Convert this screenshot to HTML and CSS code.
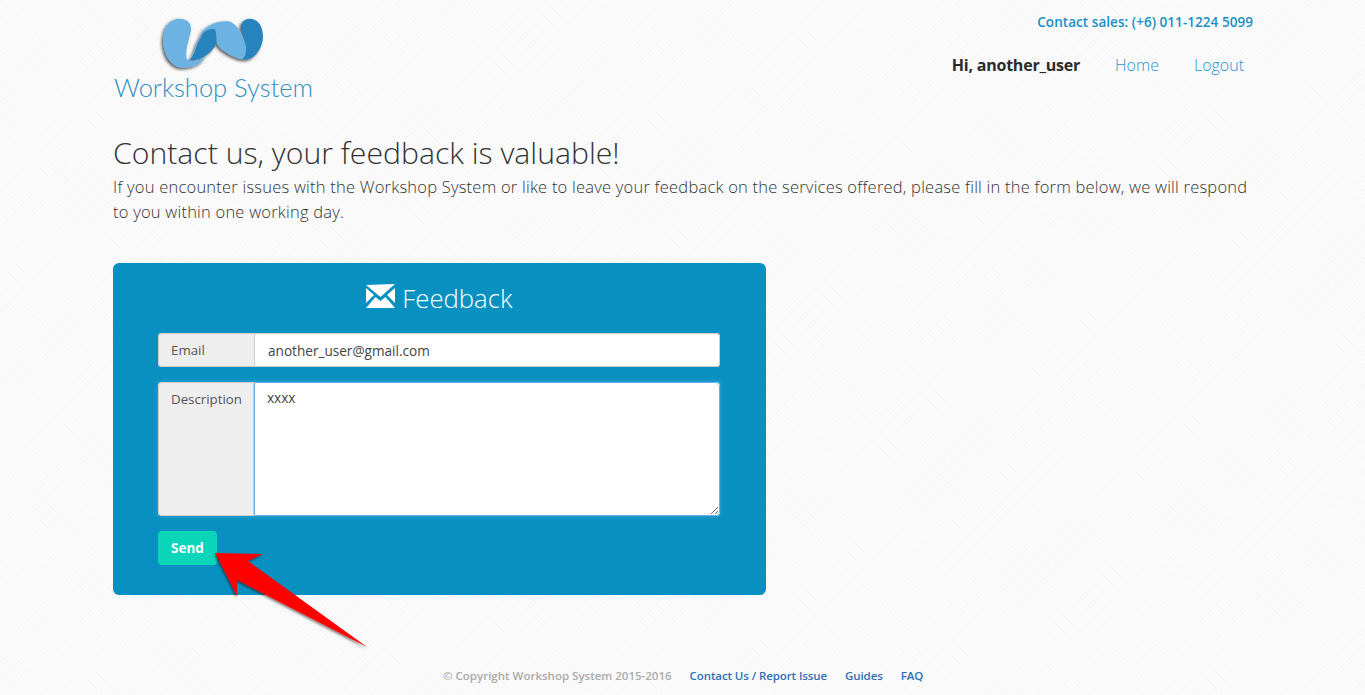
FILE: index.html
```html
<!DOCTYPE html>
<html lang="en">
<head>
    <meta charset="UTF-8">
    <meta name="viewport" content="width=device-width, initial-scale=1.0">
    <title>Contact us - Workshop System</title>
    <link rel="stylesheet" href="styles.css">
</head>
<body>

<div class="container">
    <header class="site-header">
        <a class="logo" href="#">
            <svg class="logo-mark" width="120" height="72" viewBox="150 27 360 216">
                <defs>
                    <filter id="logoShadow" x="-20%" y="-20%" width="140%" height="140%">
                        <feDropShadow dx="-5" dy="5" stdDeviation="5" flood-color="#000" flood-opacity="0.65"/>
                    </filter>
                </defs>
                <g filter="url(#logoShadow)">
                    <path fill="#2583bb" d="M425 178 C445 165 438 135 428 105 C420 85 420 70 435 60 C455 50 478 62 485 85 C495 115 485 150 460 170 C450 178 437 180 425 178 Z"/>
                    <path fill="#2583bb" d="M265 182 C285 170 282 135 305 105 C318 88 335 82 345 88 C352 110 350 120 350 130 C335 160 300 185 265 182 Z"/>
                    <path fill="#6cb2e2" d="M298 105 C318 76 350 60 385 64 C412 70 425 100 435 130 C441 150 440 170 425 178 C395 170 365 155 350 130 C350 115 350 100 345 88 C330 84 312 92 298 105 Z"/>
                    <path fill="#6cb2e2" d="M230 57 C260 52 278 70 272 95 C265 125 255 150 260 178 C275 186 300 184 318 172 C300 195 275 205 245 203 C210 200 188 160 190 115 C192 85 205 62 230 57 Z"/>
                </g>
                <path fill="none" stroke="#a9d3ef" stroke-width="1.5" d="M270 175 C288 160 285 130 305 110"/>
            </svg>
            <span class="logo-text">Workshop System</span>
        </a>
        <div class="header-right">
            <div class="sales">Contact sales: (+6) 011-1224 5099</div>
            <nav class="main-nav">
                <span class="greeting">Hi, another_user</span>
                <a href="#">Home</a>
                <a href="#">Logout</a>
            </nav>
        </div>
    </header>

    <section class="intro">
        <h1>Contact us, your feedback is valuable!</h1>
        <p>If you encounter issues with the Workshop System or like to leave your feedback on the services offered, please fill in the form below, we will respond to you within one working day.</p>
    </section>

    <form class="feedback-panel">
        <h2>
            <svg class="mail-icon" width="29" height="25" viewBox="0 0 29 25">
                <path fill="#fff" d="M0 1 L29 0 L14.5 13 Z"/>
                <path fill="#fff" d="M0 4 L8 11 L0 19 Z"/>
                <path fill="#fff" d="M29 4 L21 11 L29 19 Z"/>
                <path fill="#fff" d="M0 24 L9.5 13 L14.5 17 L19.5 13 L29 24 Z"/>
            </svg>
            Feedback
        </h2>
        <div class="input-group">
            <span class="addon">Email</span>
            <input class="field" type="text" value="another_user@gmail.com">
        </div>
        <div class="input-group textarea-group">
            <span class="addon">Description</span>
            <textarea class="field">xxxx</textarea>
        </div>
        <button class="send-button" type="button">Send</button>
    </form>

    <footer class="site-footer">
        <span class="copyright">© Copyright Workshop System 2015-2016</span>
        <a href="#">Contact Us / Report Issue</a>
        <a href="#">Guides</a>
        <a href="#">FAQ</a>
    </footer>
</div>

<svg class="arrow" width="170" height="110" viewBox="0 0 170 110">
    <defs>
        <filter id="arrowShadow" x="-10%" y="-10%" width="120%" height="120%">
            <feDropShadow dx="-1" dy="1.5" stdDeviation="1.2" flood-color="#000" flood-opacity="0.5"/>
        </filter>
    </defs>
    <path fill="#f00" filter="url(#arrowShadow)" d="M5 3 L53 4 L38 11 L157 97 L27 30 L27 46 Z"/>
</svg>

</body>
</html>
```

FILE: styles.css
```css
html, body {
    margin: 0;
    height: 100%;
}
body {
    font-family: "Open Sans", "Noto Sans", sans-serif;
    color: #444;
    background-color: #fbfbfb;
    background-image:
        repeating-linear-gradient(45deg, rgba(0,0,0,0.008) 0, rgba(0,0,0,0.008) 1px, transparent 1px, transparent 4px),
        repeating-linear-gradient(-45deg, rgba(0,0,0,0.012) 0, rgba(0,0,0,0.012) 1px, transparent 1px, transparent 3px);
    position: relative;
    overflow: hidden;
}
a {
    text-decoration: none;
}
.container {
    width: 1140px;
    height: 695px;
    margin-left: 113px;
    display: flex;
    flex-direction: column;
}

/* header */
.site-header {
    display: flex;
    justify-content: space-between;
    height: 122px;
}
.logo {
    display: flex;
    flex-direction: column;
    width: 200px;
}
.logo-mark {
    margin-left: 37px;
    margin-top: 9px;
    display: block;
}
.logo-text {
    font-family: "Lato", sans-serif;
    font-weight: 300;
    font-size: 25.5px;
    line-height: 26px;
    color: #2f8fc4;
    white-space: nowrap;
    margin-top: -7px;
    margin-left: 1px;
}
.header-right {
    display: flex;
    flex-direction: column;
    align-items: flex-end;
}
.sales {
    font-size: 13.5px;
    font-weight: 600;
    color: #1a8fc4;
    line-height: 18px;
    margin-top: 13px;
    letter-spacing: 0.05px;
}
.main-nav {
    display: flex;
    align-items: center;
    gap: 35px;
    margin-top: 21px;
    margin-right: 9px;
    line-height: 26px;
    font-size: 16px;
}
.main-nav a {
    color: #2a93cf;
    font-weight: 300;
}
.greeting {
    font-weight: 700;
    color: #2b2b2b;
    letter-spacing: -0.22px;
}

/* intro text */
.intro h1 {
    font-size: 30.2px;
    font-weight: 300;
    line-height: 40px;
    margin: 11px 0 0;
    color: #333;
}
.intro p {
    font-size: 16.5px;
    font-weight: 300;
    line-height: 25px;
    margin: 1px 0 0;
    color: #333;
    letter-spacing: 0.22px;
}

/* feedback form */
.feedback-panel {
    width: 653px;
    height: 332px;
    box-sizing: border-box;
    margin-top: 39px;
    padding: 16px 46px 0 45px;
    background: #0891c0;
    border-radius: 6px;
}
.feedback-panel h2 {
    margin: 0 0 16px;
    height: 38px;
    line-height: 40px;
    font-size: 25.7px;
    font-weight: 300;
    color: #fff;
    text-align: center;
}
.mail-icon {
    vertical-align: -1px;
    margin-right: 1px;
}
.input-group {
    display: flex;
    height: 34px;
    margin-bottom: 15px;
    background: #fff;
    border-radius: 4px;
    box-shadow: inset 0 0 0 1px #ccc;
    font-size: 13.3px;
}
.addon {
    width: 97px;
    box-sizing: border-box;
    padding: 0 12px;
    line-height: 32px;
    background: #eee;
    color: #555;
    border: 1px solid #ccc;
    border-radius: 4px 0 0 4px;
}
.field {
    flex: 1;
    border: 1px solid #ccc;
    border-left: 0;
    border-radius: 0 4px 4px 0;
    padding: 0 13px;
    font-family: inherit;
    font-size: 13.6px;
    color: #444;
    outline: none;
    min-width: 0;
}
.textarea-group {
    height: 134px;
    box-shadow: 0 0 5px rgba(102,175,233,0.6);
}
.textarea-group .addon {
    line-height: 30px;
    padding-top: 1px;
    width: 96px;
}
.textarea-group .field {
    border: 1px solid #66afe9;
    padding: 5px 12px;
    line-height: 20px;
}
.send-button {
    display: block;
    width: 59px;
    height: 34px;
    border: 0;
    border-radius: 4px;
    background: #0ad5b8;
    color: #fff;
    font-family: inherit;
    font-size: 13.5px;
    font-weight: 700;
    padding: 0;
}

/* footer */
.site-footer {
    margin-top: auto;
    padding-bottom: 9px;
    padding-left: 330px;
    display: flex;
    gap: 18px;
    font-size: 11.5px;
    font-weight: 600;
    line-height: 20px;
    letter-spacing: -0.1px;
}
.site-footer a {
    color: #2f6fb5;
}
.copyright {
    color: #aaa;
    letter-spacing: 0;
}

/* annotation drawn on top of the page */
.arrow {
    position: absolute;
    left: 210px;
    top: 550px;
}
```
